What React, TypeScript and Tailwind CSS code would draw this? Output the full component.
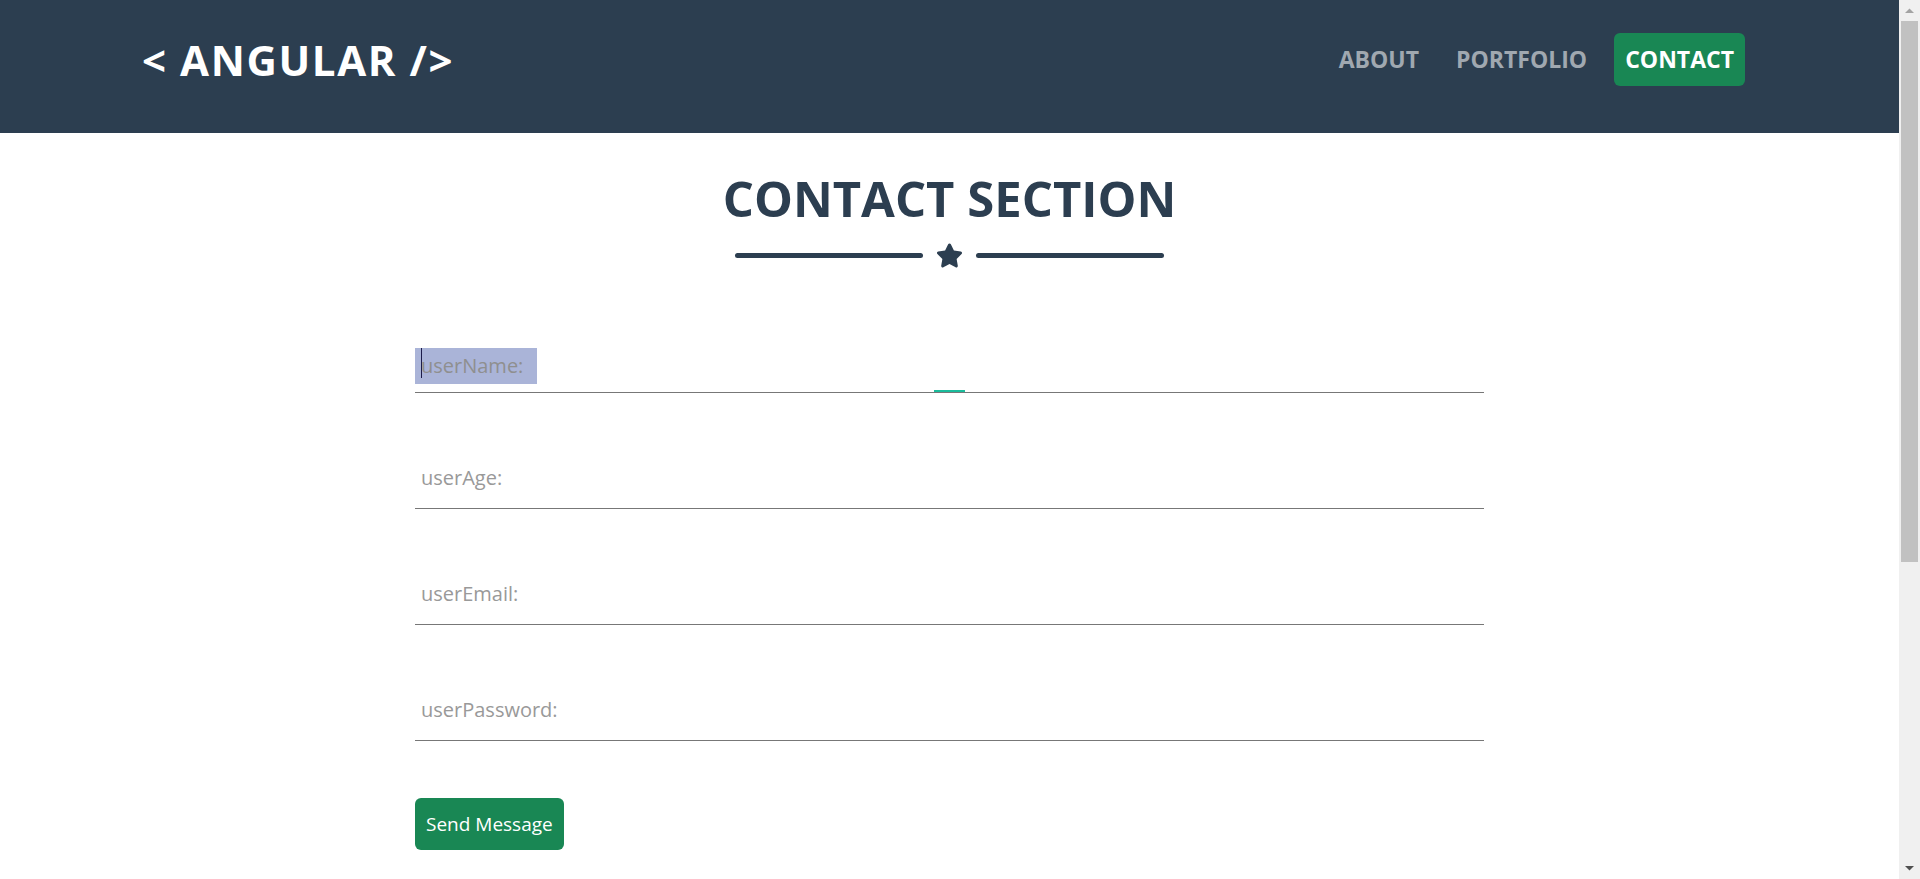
import React from 'react';
import { FaStar } from 'react-icons/fa';

const font = { fontFamily: '"Open Sans", "Noto Sans", Arial, sans-serif' };

const fields = ['userAge:', 'userEmail:', 'userPassword:'];

// fake browser scrollbar, as in the screenshot
const Scrollbar = () => (
  <div className="fixed right-0 top-0 flex h-screen w-[21px] flex-col items-center bg-[#f0f0f0]">
    <svg width="11" height="21" viewBox="0 0 11 21" className="shrink-0">
      <path d="M1 13 L5.5 8.5 L10 13 Z" fill="#a3a3a3" />
    </svg>
    <div className="h-[541px] w-[17px] bg-[#c1c1c1]" />
    <div className="flex-1" />
    <svg width="11" height="21" viewBox="0 0 11 21" className="shrink-0">
      <path d="M1 8 L5.5 12.5 L10 8 Z" fill="#505050" />
    </svg>
  </div>
);

export default function App() {
  const inputClass =
    'block h-[57px] w-full border-b border-[#777] bg-transparent px-[6px] pb-[5px] text-[20px] text-[#333] outline-none placeholder:text-[#999]';

  return (
    <div className="min-h-[1360px] bg-white" style={font}>
      <div className="mr-[21px]">
        {/* Navbar */}
        <nav className="h-[133px] bg-[#2c3e50]">
          <div className="mx-auto flex w-[1619px] items-center justify-between pt-[33px]">
            <a className="flex h-[53px] items-center pl-[2px] text-[42px] font-bold leading-none tracking-[1.6px] text-white">
              &lt; ANGULAR /&gt;
            </a>
            <ul className="flex h-[53px] items-center gap-[17px] pr-[14px] text-[23px] font-bold uppercase">
              <li className="px-[10px] text-[#a0a8b0]">About</li>
              <li className="px-[10px] text-[#a0a8b0]">Portfolio</li>
              <li className="flex h-[53px] items-center rounded-[6px] bg-[#198754] px-[11px] text-white">Contact</li>
            </ul>
          </div>
        </nav>

        {/* Contact section */}
        <section className="pt-[29px]">
          <h2 className="text-center text-[49px] font-bold leading-[72px] text-[#2c3e50]">CONTACT SECTION</h2>

          <div className="mt-[8px] flex items-center justify-center gap-[13px]">
            <div className="h-[5px] w-[188px] rounded-full bg-[#2c3e50]" />
            <FaStar className="h-[27px] w-[27px] text-[#2c3e50]" />
            <div className="h-[5px] w-[188px] rounded-full bg-[#2c3e50]" />
          </div>

          <form className="mx-auto mt-[67px] w-[1069px]">
            {/* focused field */}
            <div className="relative mb-[59px] h-[57px] border-b border-[#777]">
              <div className="absolute left-0 top-[12px] h-[36px] w-[122px] bg-[#aab4d8] pl-[6px] text-[20px] leading-[36px] text-[#8f8f8f]">
                userName:
              </div>
              <div className="absolute left-[6px] top-[12px] h-[30px] w-px bg-[#1c1c4a]" />
              <div className="absolute bottom-0 left-[519px] h-[2px] w-[31px] bg-[#1abc9c]" />
            </div>

            {fields.map((f) => (
              <div key={f} className="mb-[59px]">
                <input type="text" placeholder={f} className={inputClass} />
              </div>
            ))}

            <button
              type="button"
              className="-mt-[2px] h-[52px] rounded-[6px] bg-[#198754] px-[11px] text-[19px] text-white"
            >
              Send Message
            </button>
          </form>
        </section>
      </div>
      <Scrollbar />
    </div>
  );
}
